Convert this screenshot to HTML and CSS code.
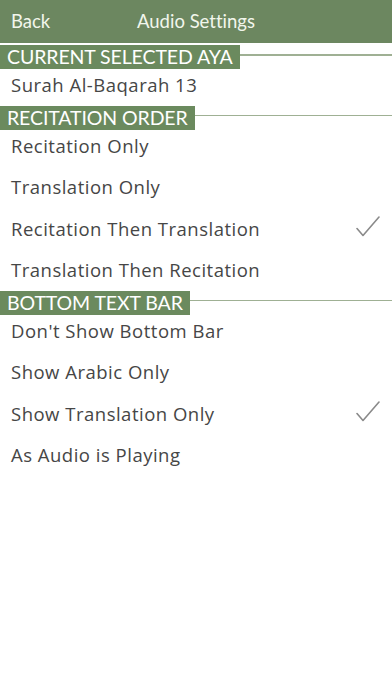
FILE: index.html
```html
<!DOCTYPE html>
<html>
<head>
<meta charset="utf-8">
<link rel="stylesheet" href="styles.css">
</head>
<body>
<div class="navbar">
  <span class="back">Back</span>
  <span class="title">Audio Settings</span>
  <span></span>
</div>
<div class="content">
  <div class="section-header first"><span class="label">CURRENT SELECTED AYA</span><span class="rule"></span></div>
  <div class="row"><span class="text">Surah Al-Baqarah 13</span></div>

  <div class="section-header"><span class="label">RECITATION ORDER</span><span class="rule"></span></div>
  <div class="row"><span class="text">Recitation Only</span></div>
  <div class="row"><span class="text">Translation Only</span></div>
  <div class="row"><span class="text">Recitation Then Translation</span>
    <svg class="check" width="24" height="22" viewBox="0 0 24 22"><path d="M1 12.5 L7 19.5 L23 1" fill="none" stroke="#8a8a8a" stroke-width="1.6" stroke-linecap="round" stroke-linejoin="round"/></svg>
  </div>
  <div class="row"><span class="text">Translation Then Recitation</span></div>

  <div class="section-header"><span class="label">BOTTOM TEXT BAR</span><span class="rule"></span></div>
  <div class="row"><span class="text">Don't Show Bottom Bar</span></div>
  <div class="row"><span class="text">Show Arabic Only</span></div>
  <div class="row"><span class="text">Show Translation Only</span>
    <svg class="check" width="24" height="22" viewBox="0 0 24 22"><path d="M1 12.5 L7 19.5 L23 1" fill="none" stroke="#8a8a8a" stroke-width="1.6" stroke-linecap="round" stroke-linejoin="round"/></svg>
  </div>
  <div class="row"><span class="text">As Audio is Playing</span></div>
</div>
</body>
</html>
```
FILE: styles.css
```css
html, body {
  margin: 0;
  padding: 0;
  background: #ffffff;
}
body {
  font-family: Lato, "Open Sans", sans-serif;
  font-variant-ligatures: none;
  width: 392px;
  height: 696px;
  overflow: hidden;
}
.navbar {
  height: 43px;
  background: #6c8760;
  display: grid;
  grid-template-columns: 1fr auto 1fr;
  align-items: center;
  color: #f2f6ec;
  font-size: 18.5px;
  padding-bottom: 1px;
  box-sizing: border-box;
}
.back {
  padding-left: 11px;
}
.content {
  padding-top: 2px;
}
.section-header {
  display: flex;
  align-items: flex-start;
  height: 24px;
  margin-top: -5px;
  position: relative;
}
.section-header.first {
  margin-top: 0;
}
.label {
  background: #6b8a5e;
  color: #ffffff;
  font-size: 19.5px;
  line-height: 24px;
  height: 24px;
  padding: 0 7px 0 7px;
  white-space: nowrap;
  letter-spacing: -0.1px;
}
.rule {
  flex: 1;
  height: 1.5px;
  margin-top: 9px;
  background: #9fb094;
}
.row {
  height: 41.5px;
  display: flex;
  align-items: flex-start;
  justify-content: space-between;
  padding: 0 12px 0 11px;
}
.text {
  font-family: "Open Sans", Lato, sans-serif;
  font-size: 18.5px;
  line-height: 31px;
  letter-spacing: 0.5px;
  color: #464646;
}
.check {
  margin-top: 3px;
}
```
